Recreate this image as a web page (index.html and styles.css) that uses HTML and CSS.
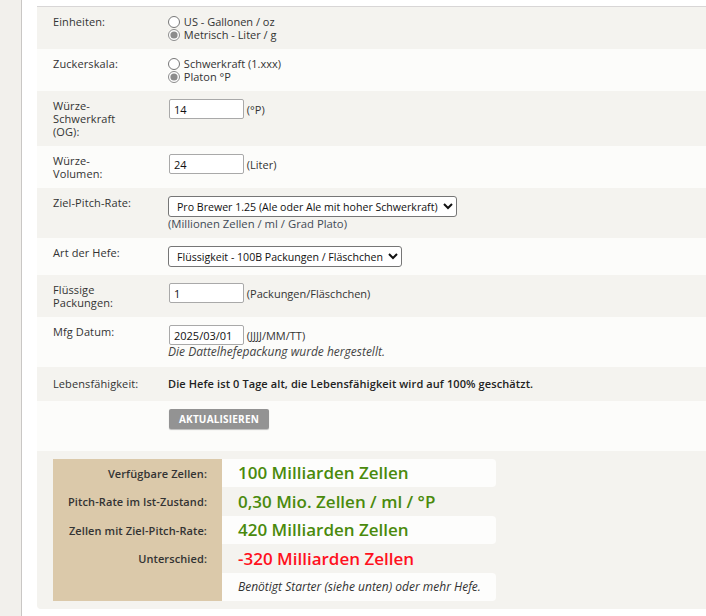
FILE: index.html
```html
<!DOCTYPE html>
<html lang="de">
<head>
  <meta charset="UTF-8">
  <meta name="viewport" content="width=device-width, initial-scale=1.0">
  <title>Hefe-Pitch-Rate Rechner</title>
  <link rel="stylesheet" href="styles.css">
</head>
<body>
  <div class="page">
    <div class="sidebar"></div>
    <div class="content">
      <div class="calc">
        <form class="calc-form" onsubmit="return false">
          <div class="row">
            <div class="label">Einheiten:</div>
            <div class="field">
              <label class="opt"><input type="radio" name="einheiten" value="us"> US - Gallonen / oz</label>
              <label class="opt"><input type="radio" name="einheiten" value="metric" checked> Metrisch - Liter / g</label>
            </div>
          </div>

          <div class="row">
            <div class="label">Zuckerskala:</div>
            <div class="field">
              <label class="opt"><input type="radio" name="skala" value="sg"> Schwerkraft (1.xxx)</label>
              <label class="opt"><input type="radio" name="skala" value="plato" checked> Platon °P</label>
            </div>
          </div>

          <div class="row">
            <div class="label">Würze-<br>Schwerkraft<br>(OG):</div>
            <div class="field">
              <input type="text" class="num" value="14"> <span class="hint">(°P)</span>
            </div>
          </div>

          <div class="row">
            <div class="label">Würze-<br>Volumen:</div>
            <div class="field">
              <input type="text" class="num" value="24"> <span class="hint">(Liter)</span>
            </div>
          </div>

          <div class="row">
            <div class="label">Ziel-Pitch-Rate:</div>
            <div class="field">
              <select>
                <option>Pro Brewer 1.25 (Ale oder Ale mit hoher Schwerkraft)</option>
              </select>
              <div class="hint sub">(Millionen Zellen / ml / Grad Plato)</div>
            </div>
          </div>

          <div class="row">
            <div class="label">Art der Hefe:</div>
            <div class="field">
              <select>
                <option>Flüssigkeit - 100B Packungen / Fläschchen</option>
              </select>
            </div>
          </div>

          <div class="row">
            <div class="label">Flüssige<br>Packungen:</div>
            <div class="field">
              <input type="text" class="num" value="1"> <span class="hint">(Packungen/Fläschchen)</span>
            </div>
          </div>

          <div class="row">
            <div class="label">Mfg Datum:</div>
            <div class="field">
              <input type="text" class="num" value="2025/03/01"> <span class="hint">(JJJJ/MM/TT)</span>
              <div class="note">Die Dattelhefepackung wurde hergestellt.</div>
            </div>
          </div>

          <div class="row row-mid">
            <div class="label">Lebensfähigkeit:</div>
            <div class="field strong">Die Hefe ist 0 Tage alt, die Lebensfähigkeit wird auf 100% geschätzt.</div>
          </div>

          <div class="row row-btn">
            <div class="label"></div>
            <div class="field"><button type="submit">Aktualisieren</button></div>
          </div>
        </form>

        <div class="results">
          <table class="result-table">
            <tr>
              <th>Verfügbare Zellen:</th>
              <td class="good">100 Milliarden Zellen</td>
            </tr>
            <tr class="alt">
              <th>Pitch-Rate im Ist-Zustand:</th>
              <td class="good">0,30 Mio. Zellen / ml / °P</td>
            </tr>
            <tr>
              <th>Zellen mit Ziel-Pitch-Rate:</th>
              <td class="good">420 Milliarden Zellen</td>
            </tr>
            <tr class="alt">
              <th>Unterschied:</th>
              <td class="bad">-320 Milliarden Zellen</td>
            </tr>
            <tr class="last">
              <th></th>
              <td class="note">Benötigt Starter (siehe unten) oder mehr Hefe.</td>
            </tr>
          </table>
        </div>
      </div>
    </div>
  </div>
</body>
</html>
```

FILE: styles.css
```css
/* Rechner fuer die Pitch-Rate */
html, body {
  margin: 0;
  padding: 0;
  background: #fff;
  overflow: hidden;
}

body {
  font-family: "Open Sans", Arial, sans-serif;
  font-size: 11px;
  line-height: 13px;
  color: #333;
}

.page {
  display: flex;
  min-height: 616px;
}

.sidebar {
  width: 21px;
  flex: none;
  background: #f2f0ec;
  border-right: 1px solid #c9c7c5;
}

.content {
  padding: 6px 0 0 15px;
}

.calc {
  width: 700px;
  background: #f4f3ef;
  border-top: 1px solid #d8d6d6;
  border-radius: 0 0 4px 4px;
}

.row {
  display: flex;
  padding: 8px 16px;
  background: #f4f3ef;
}

.row:nth-child(even) {
  background: #fcfcfa;
}

.label {
  width: 115px;
  flex: none;
  letter-spacing: .1px;
}

.field {
  flex: 1;
}

.opt {
  display: block;
  height: 13px;
}

.opt input {
  width: 12px;
  height: 12px;
  margin: 0 1px 0 0;
  vertical-align: -2px;
  accent-color: #8c8c8c;
}

input.num {
  box-sizing: border-box;
  width: 75px;
  height: 20px;
  margin: 0 0 0 1px;
  padding: 0 4px;
  border: 1px solid #a9a9a9;
  border-radius: 2px;
  background: #fff;
  font: 11px "Open Sans", Arial, sans-serif;
  color: #111;
  vertical-align: middle;
}

.hint {
  vertical-align: middle;
}

.sub {
  display: block;
  font-size: 11.3px;
  line-height: 13px;
  color: #3f4a55;
}

select {
  height: 21px;
  margin: 0;
  padding: 0 2px 0 4px;
  border: 1px solid #767676;
  border-radius: 3px;
  background: #fff;
  font: 10.6px "Open Sans", Arial, sans-serif;
  color: #111;
}

.note {
  font-size: 12px;
  font-style: italic;
  color: #444;
  line-height: 14px;
}

.row-mid {
  padding: 10px 16px 11px;
}

.strong {
  font-weight: 600;
  letter-spacing: .1px;
  color: #222;
}

.row-btn {
  padding: 8px 16px 22px;
}

button {
  width: 100px;
  height: 20px;
  margin-left: 1px;
  padding: 0;
  border: none;
  border-radius: 2px;
  background: #939393;
  box-shadow: 0 1px 1px rgba(0, 0, 0, .25);
  color: #fff;
  font: 700 10px "Open Sans", Arial, sans-serif;
  text-transform: uppercase;
  letter-spacing: .2px;
}

.results {
  padding: 8px 16px;
}

.result-table {
  width: 443px;
  border-collapse: collapse;
}

.result-table th {
  width: 154px;
  height: 28px;
  padding: 0 15px 0 0;
  background: #dbc9aa;
  text-align: right;
  font-weight: 600;
  letter-spacing: .1px;
  color: #333;
}

.result-table td {
  padding: 0 0 0 16px;
  background: #fdfdfc;
  border-radius: 0 4px 4px 0;
  font-size: 17px;
  font-weight: 600;
  line-height: 20px;
}

.result-table tr.alt th,
.result-table tr.alt td {
  height: 29px;
}

.result-table tr.alt td {
  background: #f4f3ef;
}

.result-table td.good {
  color: #4a8a0c;
}

.result-table td.bad {
  color: #ff1020;
}

.result-table td.note {
  font-size: 12px;
  font-weight: 400;
  font-style: italic;
  color: #333;
}
```
